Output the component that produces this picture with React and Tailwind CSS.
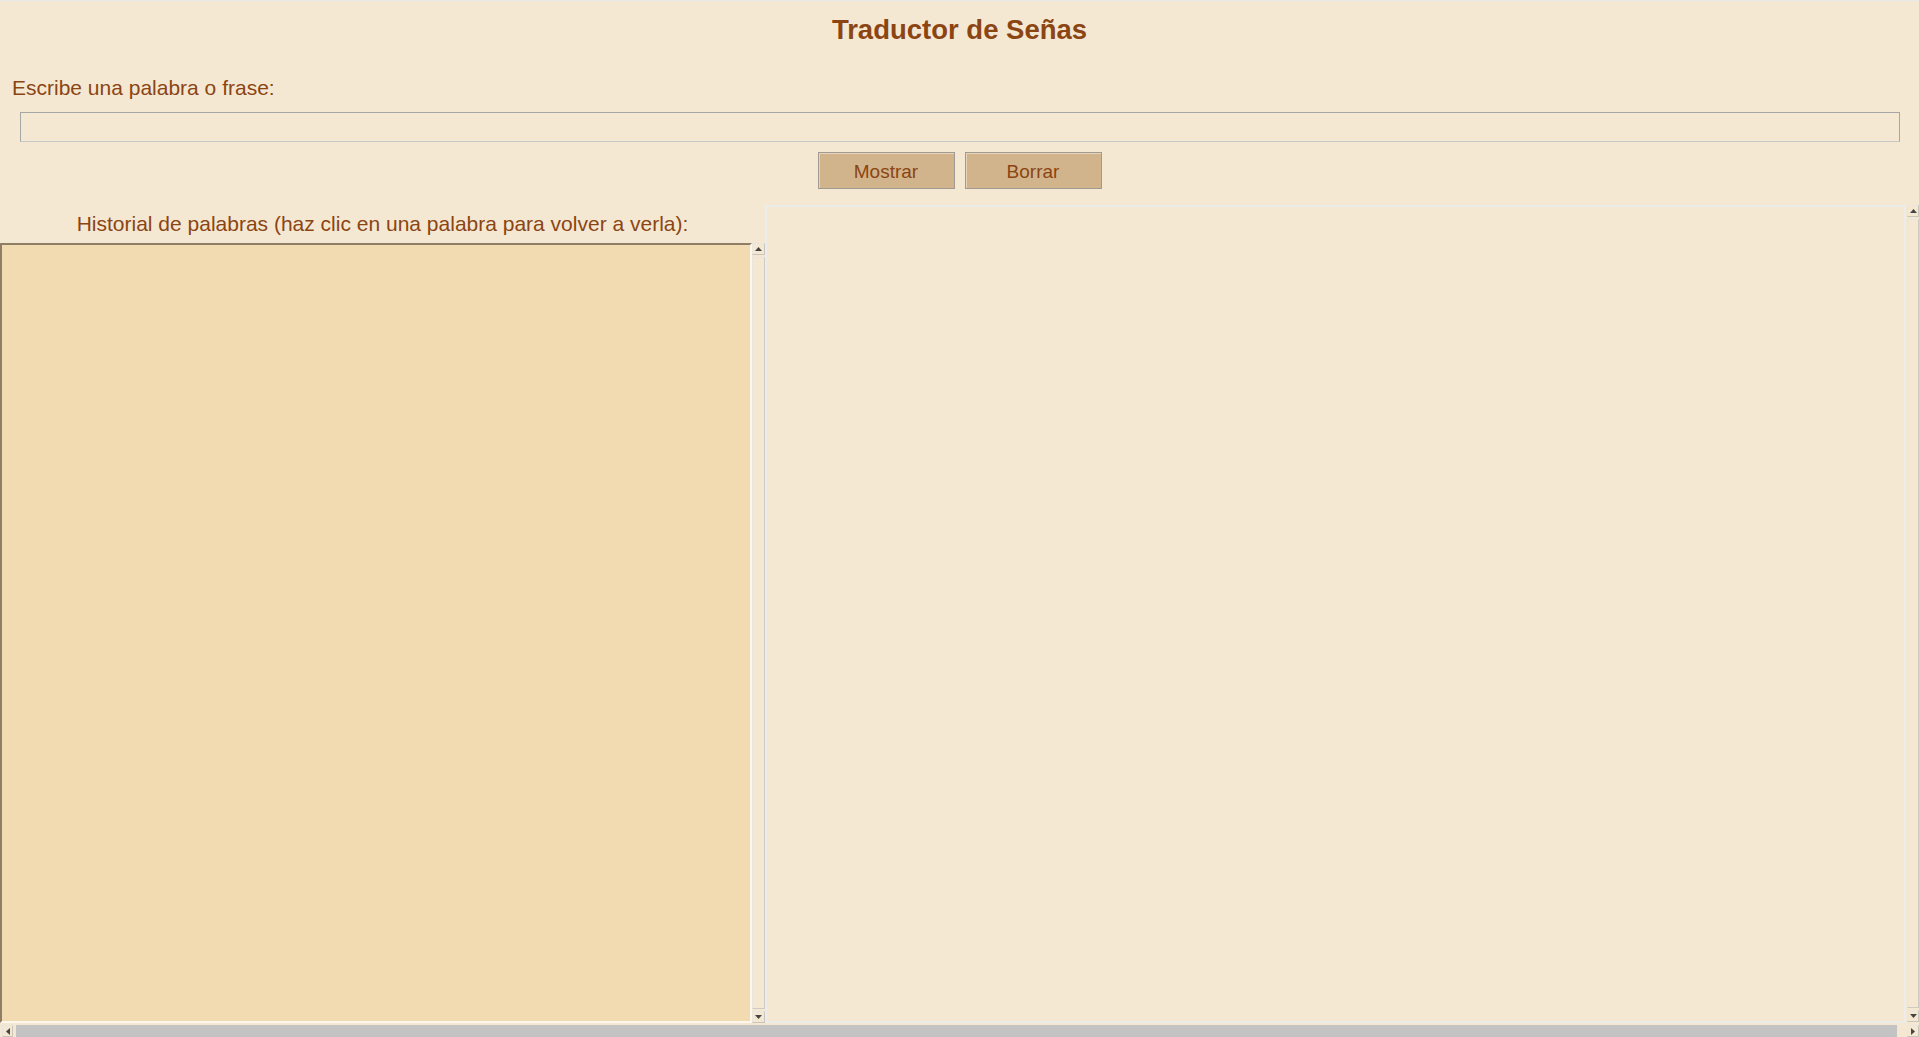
import React from 'react'

const font = { fontFamily: '"Liberation Sans", Arial, sans-serif' }

function Arrow({ dir }) {
  const pts = {
    up: '0,4 3.5,0 7,4',
    down: '0,0 7,0 3.5,4',
    left: '4,0 4,7 0,3.5',
    right: '0,0 0,7 4,3.5',
  }[dir]
  const vertical = dir === 'up' || dir === 'down'
  return (
    <svg width={vertical ? 7 : 4} height={vertical ? 4 : 7} viewBox={vertical ? '0 0 7 4' : '0 0 4 7'}>
      <polygon points={pts} fill="#454545" />
    </svg>
  )
}

function ScrollButton({ dir, className = '' }) {
  return (
    <div className={`flex items-center justify-center bg-[#f5e8d3] border border-t-[#ebe6dd] border-l-[#ebe6dd] border-r-[#c9c5bd] border-b-[#c9c5bd] ${className}`}>
      <Arrow dir={dir} />
    </div>
  )
}

// Fake vertical scrollbar (overflow: scroll with nothing to scroll)
function VScroll({ width }) {
  return (
    <div className={`flex flex-col ${width}`}>
      <ScrollButton dir="up" className="h-[12px]" />
      <div className="flex-1 my-[2px] border border-t-[#ebe6dd] border-l-[#ebe6dd] border-r-[#cfcbc3] border-b-[#cfcbc3]" />
      <ScrollButton dir="down" className="h-[12px]" />
    </div>
  )
}

export default function App() {
  return (
    <div style={font} className="h-[1037px] w-full overflow-hidden flex flex-col bg-[#f5e8d3] text-[#8b4513]">
      <div className="h-px bg-[#e9e9e9]" />

      {/* Header */}
      <h1 className="pt-[13px] text-[27.5px] leading-[32px] font-bold text-center">Traductor de Señas</h1>

      <label className="mt-[30px] px-[12px] text-[21px] leading-[24px]">Escribe una palabra o frase:</label>

      <div className="mt-[12px] pl-[20px] pr-[19px]">
        <input
          type="text"
          className="block w-full h-[30px] bg-transparent border border-[#a6a6a6] border-b-[#c8c8c8] outline-none px-1 text-[21px] text-[#8b4513]"
          style={font}
        />
      </div>

      <div className="mt-[10px] flex justify-center gap-[10px]">
        <button style={font} className="w-[137px] h-[37px] pt-[3px] bg-[#d2b48c] border border-[#a09a92] shadow-[inset_1px_1px_0_#e6d3b8] text-[19px] text-[#8b4513]">
          Mostrar
        </button>
        <button style={font} className="w-[137px] h-[37px] pt-[3px] bg-[#d2b48c] border border-[#a09a92] shadow-[inset_1px_1px_0_#e6d3b8] text-[19px] text-[#8b4513]">
          Borrar
        </button>
      </div>

      {/* Main */}
      <div className="mt-[16px] flex-1 min-h-0 flex">
        {/* History */}
        <div className="w-[765px] flex flex-col">
          <p className="pt-[7px] text-[21px] leading-[24px] text-center">
            Historial de palabras (haz clic en una palabra para volver a verla):
          </p>
          <div className="mt-[7px] flex-1 min-h-0 flex">
            <div className="flex-1 bg-[#f2dbb1] border-t-2 border-l-2 border-t-[#8f7e66] border-l-[#8f7e66] border-r-2 border-b-2 border-r-[#fdf6ec] border-b-[#fdf6ec]" />
            <VScroll width="w-[13px]" />
          </div>
        </div>

        {/* Signs display */}
        <div className="flex-1 flex">
          <div className="flex-1 border-2 border-[#ececea]" />
          <div className="ml-px flex flex-col w-[12px] pb-px">
            <VScroll width="w-[12px] flex-1" />
          </div>
        </div>
      </div>

      {/* Page horizontal scrollbar */}
      <div className="mt-[2px] h-[12px] flex pl-[2px]">
        <ScrollButton dir="left" className="w-[11px]" />
        <div className="ml-[3px] flex-1 bg-[#c3c3c3]" />
        <div className="w-[10px]" />
        <ScrollButton dir="right" className="w-[12px]" />
      </div>
    </div>
  )
}
